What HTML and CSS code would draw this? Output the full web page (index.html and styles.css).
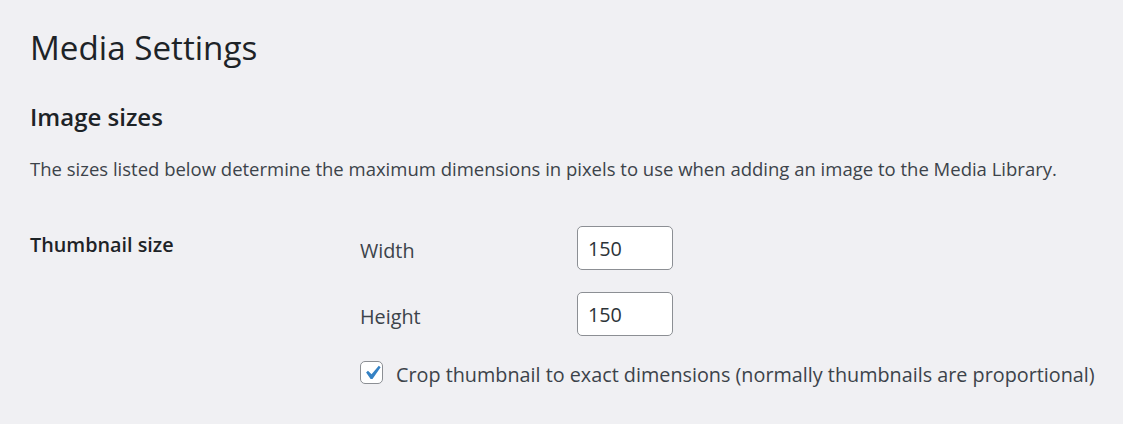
FILE: index.html
```html
<!DOCTYPE html>
<html lang="en">
<head>
  <meta charset="UTF-8">
  <meta name="viewport" content="width=device-width, initial-scale=1.0">
  <title>Media Settings</title>
  <link rel="stylesheet" href="styles.css">
</head>
<body>
  <div class="wrap">
    <h1>Media Settings</h1>

    <h2 class="title">Image sizes</h2>
    <p class="intro">The sizes listed below determine the maximum dimensions in pixels to use when adding an image to the Media Library.</p>

    <div class="form-table">
      <div class="form-row">
        <div class="row-head">Thumbnail size</div>
        <div class="row-body">
          <div class="field">
            <label for="thumbnail_size_w">Width</label>
            <input id="thumbnail_size_w" class="small-text" type="text" value="150">
          </div>
          <div class="field">
            <label for="thumbnail_size_h">Height</label>
            <input id="thumbnail_size_h" class="small-text" type="text" value="150">
          </div>
          <label class="check">
            <span class="checkbox">
              <svg width="28" height="28" viewBox="0 0 20 20">
                <path d="M14.83 4.89l1.34.94-5.81 8.38H9.02L5.78 9.67l1.34-1.25 2.57 2.4z"/>
              </svg>
            </span>
            Crop thumbnail to exact dimensions (normally thumbnails are proportional)
          </label>
        </div>
      </div>
    </div>
  </div>
</body>
</html>
```

FILE: styles.css
```css
body {
  margin: 0;
  background: #f0f0f3;
  color: #3c434a;
  font-family: 'Open Sans', 'Noto Sans', sans-serif;
}

.wrap {
  padding: 0 20px 0 30px;
}

h1 {
  margin: 28px 0 0;
  font-size: 33.2px;
  line-height: 40px;
  font-weight: 400;
  color: #1d2327;
}

.title {
  margin: 34px 0 0;
  font-size: 24px;
  line-height: 30px;
  font-weight: 600;
  color: #1d2327;
}

.intro {
  margin: 25px 0 0;
  font-size: 18.5px;
  line-height: 24px;
}

.form-table {
  margin-top: 45px;
}

.form-row {
  display: flex;
}

.row-head {
  width: 330px;
  flex-shrink: 0;
  padding-top: 6.3px;
  font-size: 19.8px;
  line-height: 26px;
  font-weight: 600;
  color: #1d2327;
}

.row-body {
  display: flex;
  flex-direction: column;
  font-size: 19.8px;
  line-height: 26px;
}

.field {
  display: flex;
  align-items: center;
  margin-bottom: 22px;
}

.field:last-of-type {
  margin-bottom: 0;
}

.field label {
  width: 217px;
  padding-top: 5px;
}

.small-text {
  box-sizing: border-box;
  width: 96px;
  height: 44px;
  margin: 0;
  padding: 0 10px;
  border: 1px solid #8c8f94;
  border-radius: 5px;
  background: #fff;
  color: #2c3338;
  font-family: inherit;
  font-size: 19.8px;
}

.check {
  display: flex;
  align-items: flex-start;
  margin-top: 26.3px;
}

.checkbox {
  box-sizing: border-box;
  width: 23px;
  height: 23px;
  margin: -1.3px 13px 0 0;
  border: 1px solid #8c8f94;
  border-radius: 5px;
  background: #fff;
  display: flex;
  align-items: center;
  justify-content: center;
  overflow: hidden;
}

.checkbox svg {
  flex-shrink: 0;
  fill: #3582c4;
}
```
